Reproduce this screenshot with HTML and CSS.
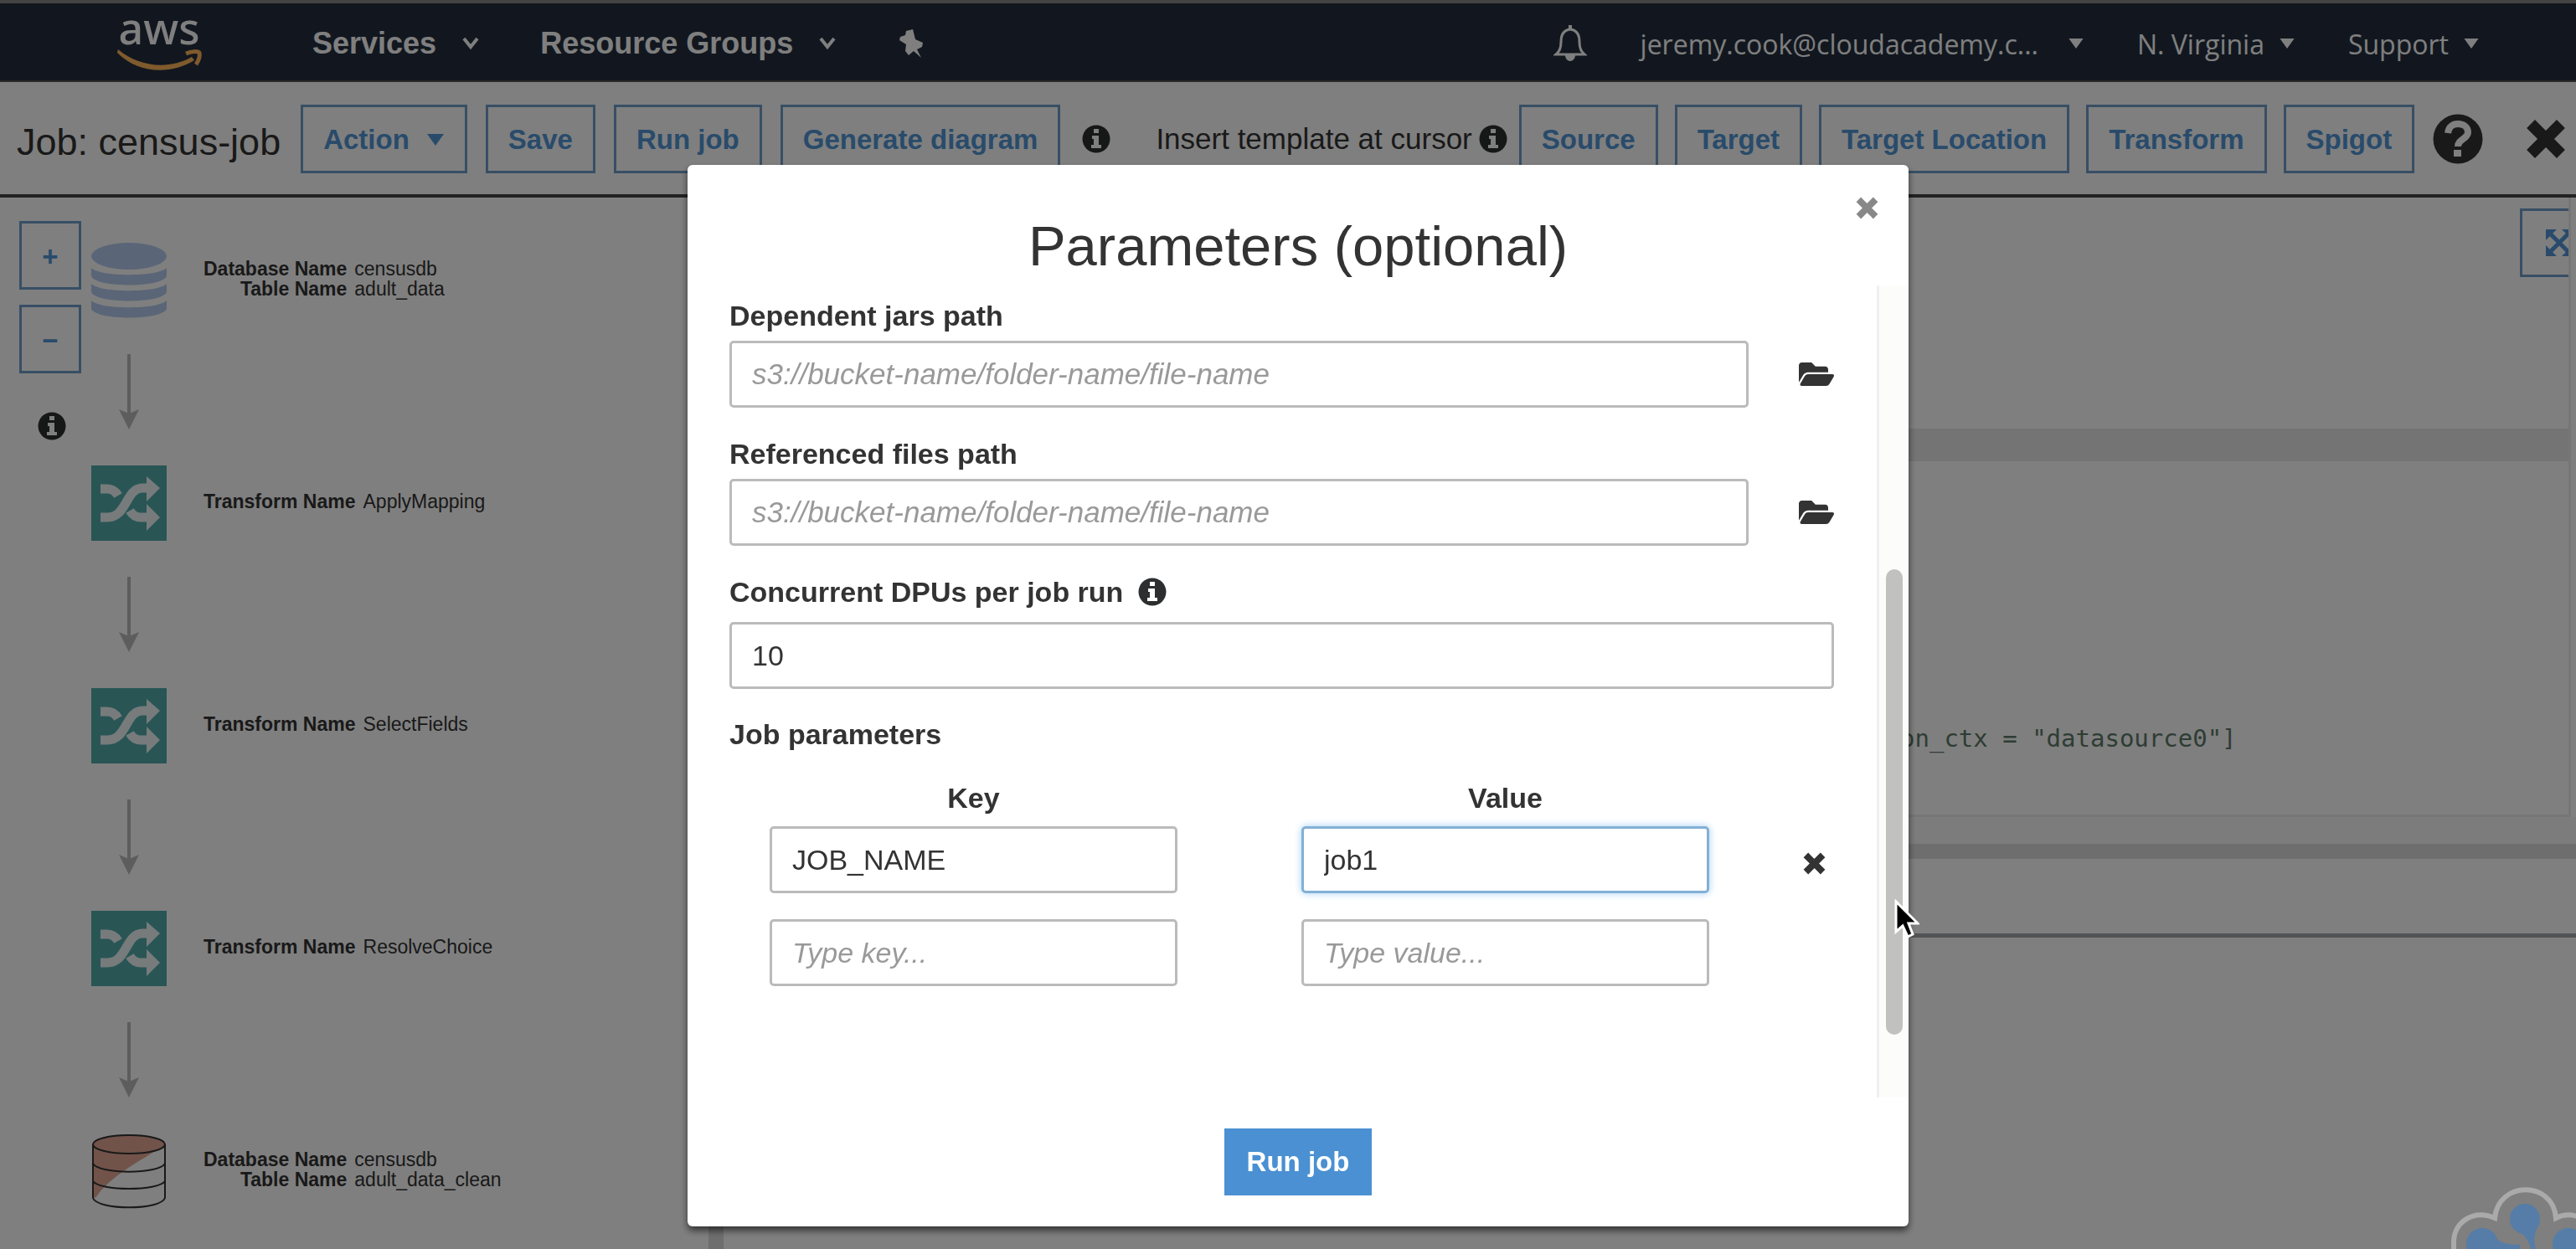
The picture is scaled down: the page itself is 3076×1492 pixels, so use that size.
FILE: index.html
```html
<!DOCTYPE html>
<html lang="en">
<head>
<meta charset="utf-8">
<title>AWS Glue - Job: census-job</title>
<link rel="stylesheet" href="styles.css">
</head>
<body>
<svg class="sprite" aria-hidden="true">
  <symbol id="info" viewBox="0 0 34 34"><circle cx="17" cy="17" r="16.5" fill="currentColor"/><path class="knock" d="M14 5h6v5h-6zM12 13h8v11h3v4H11v-4h3v-7h-2z"/></symbol>
  <symbol id="cross" viewBox="0 0 48 48"><path d="M11 11L37 37M37 11L11 37" fill="none" stroke="currentColor" stroke-width="14" stroke-linecap="square"/></symbol>
  <symbol id="folder" viewBox="0 0 576 512"><path fill="currentColor" d="M572.7 292.1L500.3 416.2A64 64 0 0 1 445 448H45c-18.500 0-30-20-20.700-36.100l72.400-124.200A64 64 0 0 1 152 256h400c18.500 0 30 20 20.700 36.100zM152 224h328v-48c0-26.500-21.500-48-48-48H272l-64-64H48C21.500 64 0 85.500 0 112v278l69-118.400C86.200 242.300 118 224 152 224z"/></symbol>
  <symbol id="caret" viewBox="0 0 20 14"><path fill="currentColor" d="M0 0h20L10 14z"/></symbol>
  <symbol id="chevron" viewBox="0 0 22 16"><path d="M3 2l8 10 8-10" fill="none" stroke="currentColor" stroke-width="4"/></symbol>
  <symbol id="arrow" viewBox="0 0 24 90"><path d="M12 0v72" stroke="currentColor" stroke-width="4"/><path fill="currentColor" d="M0 66l12 5 12-5-12 24z"/></symbol>
  <symbol id="shuffle" viewBox="0 0 90 90"><path fill="#53aaaa" d="M0 0h90v90H0z"/><g fill="none" stroke="#fff" stroke-opacity=".9" stroke-width="11"><path d="M11 62h8c24 0 22-35 42-35h5"/><path d="M11 28h8c6 0 10 3 13 8" /><path d="M46 54c3 5 7 8 13 8h7"/></g><path fill="#fff" fill-opacity=".9" d="M66 13l16 14-16 16zM66 46l16 16-16 16z"/></symbol>
</svg>

<header class="nav">
  <a class="logo" href="#" aria-label="AWS home"><svg viewBox="0 0 102 64"><text class="logo-text" x="50" y="33" text-anchor="middle">aws</text><path fill="#ffb45a" d="M1 39c26 22 62 24 88 9l3 4C65 69 26 69 0 43z"/><path fill="none" stroke="#ffb45a" stroke-width="5" d="M82 44c7-3 14-3 16-1 1 2 0 9-4 14"/></svg></a>
  <nav class="menu">
    <a href="#">Services<svg class="chevron"><use href="#chevron"/></svg></a>
    <a href="#">Resource Groups<svg class="chevron"><use href="#chevron"/></svg></a>
    <a class="pin" href="#" aria-label="Pin"><svg viewBox="0 0 32 34"><path fill="currentColor" d="M9 2l8-2 3 12 9 4-1 5-6 3 5 10-9-8-6 5-4-5 1-8-8-5 1-4 6-2z"/></svg></a>
  </nav>
  <div class="account">
    <a class="bell" href="#" aria-label="Notifications"><svg viewBox="0 0 40 44"><path fill="none" stroke="currentColor" stroke-width="3" d="M20 5c-9 1-11 8-11 15 0 8-2 12-6 15h34c-4-3-6-7-6-15 0-7-2-14-11-15z"/><path fill="currentColor" d="M18 0h4v6h-4zM14 36h12c0 4-3 7-6 7s-6-3-6-7z"/></svg></a>
    <a class="user" href="#">jeremy.cook@cloudacademy.c...<svg class="tri"><use href="#caret"/></svg></a>
    <a href="#">N. Virginia<svg class="tri"><use href="#caret"/></svg></a>
    <a href="#">Support<svg class="tri"><use href="#caret"/></svg></a>
  </div>
</header>

<div class="toolbar">
  <h1>Job: census-job</h1>
  <button class="btn">Action<svg class="drop"><use href="#caret"/></svg></button>
  <button class="btn">Save</button>
  <button class="btn">Run job</button>
  <button class="btn">Generate diagram</button>
  <svg class="info diagram-info"><use href="#info"/></svg>
  <div class="template">
    <span class="template-label">Insert template at cursor<svg class="info"><use href="#info"/></svg></span>
    <button class="btn">Source</button>
    <button class="btn">Target</button>
    <button class="btn">Target Location</button>
    <button class="btn">Transform</button>
    <button class="btn">Spigot</button>
  </div>
  <button class="plain help" aria-label="Help"><svg viewBox="0 0 60 60"><circle cx="30" cy="30" r="29.500" fill="currentColor"/><path fill="none" stroke="#fff" stroke-width="8" d="M18 23c1-8 6-11 12-11 7 0 12 4 12 10 0 8-12 8-12 17"/><path fill="#fff" d="M25 43h9v8h-9z"/></svg></button>
  <button class="plain close-job" aria-label="Close job"><svg><use href="#cross"/></svg></button>
</div>

<main class="work">
  <section class="diagram">
    <div class="zoom">
      <button class="btn">+</button>
      <button class="btn">−</button>
      <svg class="info"><use href="#info"/></svg>
    </div>
    <div class="flow">
      <div class="node"><svg class="pic" viewBox="0 0 90 90"><g fill="#b4cbee"><ellipse cx="45" cy="16" rx="45" ry="16"/><path d="M0 30c10 11 80 11 90 0v10c-6 14-84 14-90 0z"/><path d="M0 49c10 11 80 11 90 0v10c-6 14-84 14-90 0z"/><path d="M0 69c10 11 80 11 90 0v10c-6 14-84 14-90 0z"/></g></svg>
        <dl><dt>Database Name</dt><dd>censusdb</dd><dt>Table Name</dt><dd>adult_data</dd></dl></div>
      <svg class="arrow"><use href="#arrow"/></svg>
      <div class="node"><svg class="pic"><use href="#shuffle"/></svg><dl><dt>Transform Name</dt><dd>ApplyMapping</dd></dl></div>
      <svg class="arrow"><use href="#arrow"/></svg>
      <div class="node"><svg class="pic"><use href="#shuffle"/></svg><dl><dt>Transform Name</dt><dd>SelectFields</dd></dl></div>
      <svg class="arrow"><use href="#arrow"/></svg>
      <div class="node"><svg class="pic"><use href="#shuffle"/></svg><dl><dt>Transform Name</dt><dd>ResolveChoice</dd></dl></div>
      <svg class="arrow"><use href="#arrow"/></svg>
      <div class="node"><svg class="pic" viewBox="0 0 90 90"><path fill="#fff" fill-opacity=".3" d="M1 13v64c6 15 82 15 88 0V13z"/><path fill="#e4a794" d="M1 13C8-3 82-3 89 13c-2 4-6 6-14 9C45 40 20 55 5 77l-4-2z"/><g fill="none" stroke="#333" stroke-width="2"><ellipse cx="45" cy="13" rx="43" ry="11"/><path d="M2 13v64c5 15 81 15 86 0V13M2 36c8 13 78 13 86 0M2 57c8 12 78 12 86 0"/></g></svg>
        <dl><dt>Database Name</dt><dd>censusdb</dd><dt>Table Name</dt><dd>adult_data_clean</dd></dl></div>
    </div>
  </section>
  <section class="script">
    <div class="editor">
      <button class="btn expand" aria-label="Expand editor"><svg viewBox="0 0 32 32"><path fill="none" stroke="currentColor" stroke-width="5" d="M5 5l22 22M27 5L5 27"/><path fill="currentColor" d="M0 0h13L0 13zM32 0v13L19 0zM0 32V19l13 13zM32 32H19l13-13z"/></svg></button>
      <div class="active-line"></div>
      <pre class="code">on_ctx = "datasource0"]</pre>
    </div>
    <div class="splitter"></div>
    <div class="tabs"></div>
  </section>
</main>

<div class="overlay">
  <form class="modal" role="dialog" aria-labelledby="dialog-title">
    <button type="button" class="plain dismiss" aria-label="Close"><svg><use href="#cross"/></svg></button>
    <h2 id="dialog-title">Parameters (optional)</h2>
    <div class="body">
      <div class="fields">
        <label for="jars">Dependent jars path</label>
        <div class="row"><input id="jars" class="path" placeholder="s3://bucket-name/folder-name/file-name"><button type="button" class="plain browse" aria-label="Browse jars"><svg><use href="#folder"/></svg></button></div>
        <label for="files">Referenced files path</label>
        <div class="row"><input id="files" class="path" placeholder="s3://bucket-name/folder-name/file-name"><button type="button" class="plain browse" aria-label="Browse files"><svg><use href="#folder"/></svg></button></div>
        <label for="dpus">Concurrent DPUs per job run<svg class="info"><use href="#info"/></svg></label>
        <div class="row dpu"><input id="dpus" value="10"></div>
        <h3>Job parameters</h3>
        <div class="params">
          <span id="key-head">Key</span><span id="value-head">Value</span><span></span>
          <input aria-labelledby="key-head" value="JOB_NAME"><input class="focused" aria-labelledby="value-head" value="job1"><button type="button" class="plain remove" aria-label="Remove"><svg><use href="#cross"/></svg></button>
          <input aria-labelledby="key-head" placeholder="Type key..."><input aria-labelledby="value-head" placeholder="Type value...">
        </div>
      </div>
      <div class="track"><div class="thumb"></div></div>
    </div>
    <button type="button" class="run">Run job</button>
  </form>
</div>

<svg class="cloud" viewBox="0 0 149 74" aria-hidden="true"><path fill="none" stroke="#aaa" stroke-width="6" d="M3 74V66C3 42 26 26 52 37 56-8 122-8 125 37c10-5 20-5 30 0"/><g fill="#557da8"><circle cx="88" cy="38" r="18"/><circle cx="37" cy="68" r="19"/><circle cx="140" cy="68" r="19"/><path d="M72 47c14 8 20 14 23 27h6c-3-11-2-20 4-30zM46 54c8 12 20 15 36 15v6H40z"/></g></svg>
<svg class="cursor" viewBox="0 0 30 48" aria-hidden="true"><path fill="#000" stroke="#fff" stroke-width="3" d="M2 3v36l8-7 6 13 6-3-5-13h11z"/></svg>
</body>
</html>
```
FILE: styles.css
```css
* { box-sizing: border-box; }
body {
  margin: 0;
  height: 100vh;
  display: flex;
  flex-direction: column;
  overflow: hidden;
  background: #fff;
  color: #333;
  font-family: "Liberation Sans", Arial, sans-serif;
  font-size: 34px;
}
a { color: inherit; text-decoration: none; }
h1, h2, h3, dl, dd, pre { margin: 0; }
svg { display: block; flex: none; }
button, input { font: inherit; color: inherit; }
.sprite { position: absolute; width: 0; height: 0; }
.plain { border: 0; padding: 0; background: none; }
.info { width: 34px; height: 34px; color: #2c2e2f; }
.knock { fill: #fff; }

/* Console navigation */
.nav {
  display: flex;
  align-items: center;
  height: 98px;
  padding: 4px 116px 0 140px;
  border-top: 4px solid #888;
  border-bottom: 2px solid #555;
  background: #252f3e;
  color: #fff;
}
.logo svg { width: 102px; height: 64px; overflow: visible; }
.logo-text { font: 500 52px "Noto Sans", sans-serif; fill: #fff; }
.menu { display: flex; align-items: center; gap: 72px; margin-left: 131px; font-size: 36px; font-weight: bold; }
.menu a, .account a { display: flex; align-items: center; }
.chevron { width: 22px; height: 16px; margin-left: 30px; }
.pin { margin-left: 2px; }
.pin svg { width: 32px; height: 34px; }
.account { display: flex; align-items: center; gap: 64px; margin-left: auto; font: 32px "Open Sans", sans-serif; }
.bell svg { width: 40px; height: 44px; }
.tri { width: 18px; height: 12px; margin-left: 18px; }
.user .tri { margin-left: 36px; }

/* Job toolbar */
.toolbar {
  display: flex;
  align-items: center;
  gap: 22px;
  height: 138px;
  padding: 2px 12px 0 20px;
  border-bottom: 4px solid #444;
}
.toolbar h1 { padding: 8px 2px 0 0; font-size: 45px; font-weight: normal; line-height: 52px; }
.btn {
  display: flex;
  align-items: center;
  justify-content: center;
  flex: none;
  height: 82px;
  padding: 2px 24px 0;
  border: 3px solid #6f9fcb;
  background: none;
  color: #5296d6;
  font-size: 33px;
  font-weight: bold;
  white-space: nowrap;
}
.drop { width: 22px; height: 14px; margin-left: 20px; }
.diagram-info { margin-left: 4px; }
.template { display: flex; align-items: center; gap: 20px; margin-left: 32px; white-space: nowrap; }
.template-label { display: flex; align-items: center; gap: 8px; margin-right: -6px; font-size: 35px; }
.help svg { width: 60px; height: 60px; }
.close-job { margin-left: auto; }
.close-job svg { width: 48px; height: 48px; }

/* Diagram pane */
.work { display: flex; flex: 1; min-height: 0; }
.diagram { display: flex; align-items: flex-start; gap: 12px; width: 864px; padding: 28px 0 0 23px; border-right: 18px solid #ddd; }
.zoom { display: flex; flex-direction: column; gap: 18px; width: 74px; }
.zoom .btn { padding: 4px 0 0; }
.zoom .info { margin: 28px 0 0 22px; }
.flow { padding-top: 26px; }
.node { display: flex; align-items: center; gap: 44px; height: 90px; }
.pic { width: 90px; height: 90px; }
.node dl { display: grid; grid-template-columns: auto auto; column-gap: 9px; padding-bottom: 4px; font-size: 23px; line-height: 24px; }
.node dt { font-weight: bold; text-align: right; }
.arrow { width: 24px; height: 90px; margin: 43px 33px; color: #bbb; }

/* Script pane */
.script { flex: 1; min-width: 0; }
.editor { position: relative; height: 740px; margin-right: 6px; padding-top: 276px; border: solid #ececec; border-width: 0 3px 3px 0; overflow: hidden; }
.expand { position: absolute; top: 13px; right: -36px; padding: 0 28px; }
.expand svg { width: 32px; height: 32px; }
.active-line { height: 39px; background: #e8e8e8; }
.code { padding: 312px 0 0 1405px; font: 29px/39px "DejaVu Sans Mono", monospace; color: #5c7a68; }
.splitter { height: 50px; border-top: 32px solid #f8f8f8; background: #ddd; }
.tabs { height: 94px; border-bottom: 5px solid #a2a6a8; }

/* Parameters dialog */
.overlay {
  position: fixed;
  inset: 0;
  display: flex;
  justify-content: center;
  align-items: flex-start;
  padding: 197px 0 0 24px;
  background: rgba(0, 0, 0, .5);
}
.modal {
  position: relative;
  display: flex;
  flex-direction: column;
  align-items: center;
  width: 1458px;
  padding: 55px 0 37px;
  border-radius: 6px;
  background: #fff;
  box-shadow: 0 5px 8px rgba(0, 0, 0, .6);
}
.dismiss { position: absolute; top: 38px; right: 36px; color: #888; }
.dismiss svg, .remove svg { width: 27px; height: 27px; }
.modal h2 { margin-bottom: 5px; font-size: 67px; font-weight: normal; line-height: 84px; }
.body { display: flex; align-self: stretch; height: 970px; }
.fields { flex: 1; min-width: 0; padding: 16px 51px 0 50px; }
.fields label, .fields h3 { display: flex; align-items: center; gap: 18px; font-size: 34px; font-weight: bold; line-height: 40px; }
.row { display: flex; align-items: center; gap: 60px; margin: 10px 0 35px; }
.row.dpu { margin: 16px 0 34px; }
input {
  flex: 1;
  width: 100%;
  height: 80px;
  padding: 0 24px;
  border: 3px solid #bbb;
  border-radius: 5px;
  background: #fff;
  outline: 0;
}
input::placeholder { color: #999; font-style: italic; opacity: 1; }
.path { font-size: 35px; }
.browse svg { width: 42px; height: 38px; }
.params { display: grid; grid-template-columns: 523px 487px 30px; gap: 31px 112px; padding-left: 48px; margin-top: 36px; align-items: center; }
.params span, .params input { width: 487px; }
.params span { height: 40px; margin-bottom: -17px; font-weight: bold; line-height: 40px; text-align: center; }
.params span:empty { width: auto; }
.params .focused { border-color: #82b0d6; box-shadow: 0 0 10px #a5cff5; }
.remove { margin-top: 8px; }
.track { flex: none; width: 38px; padding: 339px 7px 0 8px; border-left: 3px solid #f0f0f0; background: #fcfcfa; }
.thumb { height: 556px; border-radius: 10px; background: #c1c1bf; }
.run { height: 80px; margin-top: 37px; padding: 0 27px; border: 0; background: #4a90d2; color: #fff; font-size: 33px; font-weight: bold; }

/* Layers above the page */
.cloud { position: fixed; right: 0; bottom: 0; width: 149px; height: 74px; }
.cursor { position: fixed; left: 2262px; top: 1074px; width: 30px; height: 48px; }
```
